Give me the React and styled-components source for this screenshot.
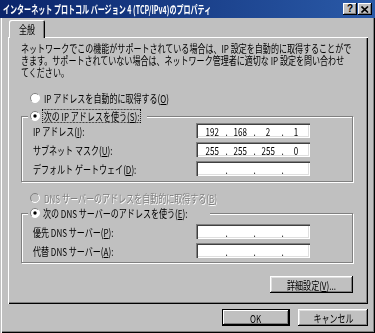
import React from 'react'
import styled, { createGlobalStyle } from 'styled-components'

const GlobalStyle = createGlobalStyle`
  html, body {
    margin: 0;
    padding: 0;
    overflow: hidden;
    background: #c0c0c0;
  }
  body {
    font-family: "Noto Sans CJK JP", "Noto Sans", sans-serif;
    font-size: 11px;
    color: #000;
  }
`

const Window = styled.div`
  width: 375px;
  height: 333px;
  box-sizing: border-box;
  background: #c0c0c0;
  display: flex;
  flex-direction: column;
  overflow: hidden;
  box-shadow: inset 1px 0 0 #c0c0c0, inset 2px 0 0 #fff, inset -1px -1px 0 #000,
    inset -2px -2px 0 #808080;
`

const TitleBar = styled.div`
  height: 18px;
  flex: none;
  display: flex;
  align-items: center;
  justify-content: space-between;
  padding: 0 3px;
  background: linear-gradient(to right, #0a246a, #2a5aa8);
`

const TitleButtons = styled.div`
  display: flex;
  gap: 1px;
`

const TitleButton = styled.div`
  width: 14px;
  height: 12px;
  box-sizing: border-box;
  display: flex;
  align-items: center;
  justify-content: center;
  background: #c0c0c0;
  font-family: "Liberation Sans", sans-serif;
  font-weight: 700;
  font-size: 10px;
  line-height: 10px;
  box-shadow: inset -1px -1px 0 #000, inset 1px 1px 0 #fff, inset -2px -2px 0 #808080;
`

const Txt = styled.span`
  display: inline-block;
  white-space: nowrap;
  line-height: 12px;
  transform: scaleX(0.73);
  transform-origin: ${p => (p.$center ? 'center' : 'left')} center;
  color: ${p => (p.$disabled ? '#808080' : 'inherit')};
  text-shadow: ${p => (p.$disabled ? '1px 1px 0 #fff' : 'none')};
  outline: ${p => (p.$focus ? '1px dotted #000' : 'none')};
  padding: ${p => (p.$focus ? '0 1px' : '0')};
`

const TitleText = styled(Txt)`
  color: #fff;
  font-weight: 700;
  transform: scaleX(0.64);
`

const Line = styled(Txt)`
  display: block;
  height: 12px;
`

const Body = styled.div`
  flex: 1;
  display: flex;
  flex-direction: column;
  padding: 2px 7px 0 8px;
`

const TabRow = styled.div`
  display: flex;
  height: 17px;
  padding-left: 1px;
`

const Tab = styled.div`
  width: 36px;
  height: 18px;
  position: relative;
  z-index: 1;
  display: flex;
  align-items: center;
  justify-content: center;
  background: #c0c0c0;
  border-radius: 2px 2px 0 0;
  box-shadow: inset 1px 1px 0 #fff, inset -1px 0 0 #000, inset -2px 0 0 #808080;
`

const Panel = styled.div`
  width: 360px;
  height: 267px;
  box-sizing: border-box;
  display: flex;
  flex-direction: column;
  padding: 5px 13px 0;
  box-shadow: inset 1px 1px 0 #fff, inset -1px -1px 0 #000, inset -2px -2px 0 #808080;
`

const Paragraph = styled.div`
  line-height: 12px;
`

const RadioRow = styled.div`
  display: flex;
  align-items: center;
  gap: 4px;
  height: 14px;
  margin: ${p => p.$mt}px 0 0 9px;
`

const Group = styled.fieldset`
  margin: ${p => p.$mt}px 0 0;
  padding: ${p => p.$pt}px 0 ${p => p.$pb}px 0;
  width: 332px;
  min-width: 0;
  box-sizing: border-box;
  border: 1px solid #808080;
  box-shadow: inset 1px 1px 0 #fff, 1px 1px 0 #fff;
`

const Legend = styled.legend`
  display: flex;
  align-items: center;
  gap: 3px;
  width: ${p => p.$w}px;
  height: 14px;
  box-sizing: border-box;
  margin-left: 6px;
  padding: 0 0 0 2px;
  background: #c0c0c0;
`

const FieldRow = styled.div`
  display: flex;
  align-items: center;
  height: 15px;
  margin: ${p => p.$mt}px 0 0 11px;
`

const FieldLabel = styled.div`
  width: 163px;
  flex: none;
`

const IpBox = styled.div`
  width: 114px;
  height: 15px;
  box-sizing: border-box;
  display: flex;
  align-items: center;
  padding-left: 4px;
  background: #fff;
  box-shadow: inset 1px 1px 0 #808080, inset 2px 2px 0 #404040, inset -1px -1px 0 #fff,
    inset -2px -2px 0 #dfdfdf;
`

const Octet = styled.div`
  width: 25px;
  display: flex;
  justify-content: center;
`

const Dot = styled.div`
  width: 3px;
  display: flex;
  justify-content: center;
`

const ButtonRow = styled.div`
  display: flex;
  justify-content: flex-end;
  gap: 8px;
  width: ${p => (p.$w ? `${p.$w}px` : 'auto')};
  margin-top: ${p => p.$mt}px;
`

const Button = styled.div`
  width: ${p => p.$w}px;
  height: 17px;
  box-sizing: border-box;
  display: flex;
  align-items: center;
  justify-content: center;
  background: #c0c0c0;
  box-shadow: ${p =>
    p.$default
      ? 'inset 0 0 0 1px #000, inset -2px -2px 0 #000, inset 2px 2px 0 #fff, inset -3px -3px 0 #808080'
      : 'inset -1px -1px 0 #000, inset 1px 1px 0 #fff, inset -2px -2px 0 #808080, inset 2px 2px 0 #dfdfdf'};
`

const Radio = ({ checked, disabled }) => (
  <svg width="10" height="10" viewBox="0 0 10 10" style={{ flex: 'none' }}>
    <circle cx="5" cy="5" r="4.5" fill={disabled ? '#c0c0c0' : '#fff'} />
    <path d="M8.2 1.8 A4.5 4.5 0 0 0 1.8 8.2" stroke="#808080" fill="none" />
    <path d="M1.8 8.2 A4.5 4.5 0 0 0 8.2 1.8" stroke="#fff" fill="none" />
    {checked && <circle cx="5" cy="5" r="1.7" fill="#000" />}
  </svg>
)

const CloseIcon = () => (
  <svg width="8" height="7" viewBox="0 0 8 7">
    <path d="M0.5 0.5 L7 6.5 M7 0.5 L0.5 6.5" stroke="#000" strokeWidth="1.6" />
  </svg>
)

const IpField = ({ parts = ['', '', '', ''] }) => (
  <IpBox>
    {parts.map((p, i) => (
      <React.Fragment key={i}>
        <Octet>
          <Txt $center>{p}</Txt>
        </Octet>
        {i < 3 && (
          <Dot>
            <Txt $center>.</Txt>
          </Dot>
        )}
      </React.Fragment>
    ))}
  </IpBox>
)

const App = () => (
  <Window>
    <GlobalStyle />
    <TitleBar>
      <TitleText>インターネット プロトコル バージョン 4 (TCP/IPv4)のプロパティ</TitleText>
      <TitleButtons>
        <TitleButton>?</TitleButton>
        <TitleButton>
          <CloseIcon />
        </TitleButton>
      </TitleButtons>
    </TitleBar>
    <Body>
      <TabRow>
        <Tab>
          <Txt $center>全般</Txt>
        </Tab>
      </TabRow>
      <Panel>
        <Paragraph>
          <Line>ネットワークでこの機能がサポートされている場合は、IP 設定を自動的に取得することがで</Line>
          <Line>きます。サポートされていない場合は、ネットワーク管理者に適切な IP 設定を問い合わせ</Line>
          <Line>てください。</Line>
        </Paragraph>

        <RadioRow $mt={13}>
          <Radio />
          <Txt>IP アドレスを自動的に取得する(<u>O</u>)</Txt>
        </RadioRow>

        <Group $mt={4} $pt={0} $pb={5}>
          <Legend $w={119}>
            <Radio checked />
            <Txt $focus>次の IP アドレスを使う(<u>S</u>):</Txt>
          </Legend>
          <FieldRow $mt={0}>
            <FieldLabel>
              <Txt>IP アドレス(<u>I</u>):</Txt>
            </FieldLabel>
            <IpField parts={['192', '168', '2', '1']} />
          </FieldRow>
          <FieldRow $mt={4}>
            <FieldLabel>
              <Txt>サブネット マスク(<u>U</u>):</Txt>
            </FieldLabel>
            <IpField parts={['255', '255', '255', '0']} />
          </FieldRow>
          <FieldRow $mt={4}>
            <FieldLabel>
              <Txt>デフォルト ゲートウェイ(<u>D</u>):</Txt>
            </FieldLabel>
            <IpField />
          </FieldRow>
        </Group>

        <RadioRow $mt={9}>
          <Radio disabled />
          <Txt $disabled>DNS サーバーのアドレスを自動的に取得する(<u>B</u>)</Txt>
        </RadioRow>

        <Group $mt={1} $pt={4} $pb={4}>
          <Legend $w={182}>
            <Radio checked />
            <Txt>次の DNS サーバーのアドレスを使う(<u>E</u>):</Txt>
          </Legend>
          <FieldRow $mt={0}>
            <FieldLabel>
              <Txt>優先 DNS サーバー(<u>P</u>):</Txt>
            </FieldLabel>
            <IpField />
          </FieldRow>
          <FieldRow $mt={4}>
            <FieldLabel>
              <Txt>代替 DNS サーバー(<u>A</u>):</Txt>
            </FieldLabel>
            <IpField />
          </FieldRow>
        </Group>

        <ButtonRow $w={332} $mt={13}>
          <Button $w={83}>
            <Txt $center>詳細設定(<u>V</u>)...</Txt>
          </Button>
        </ButtonRow>
      </Panel>

      <ButtonRow $mt={5}>
        <Button $w={68} $default>
          <Txt $center>OK</Txt>
        </Button>
        <Button $w={70}>
          <Txt $center>キャンセル</Txt>
        </Button>
      </ButtonRow>
    </Body>
  </Window>
)

export default App
